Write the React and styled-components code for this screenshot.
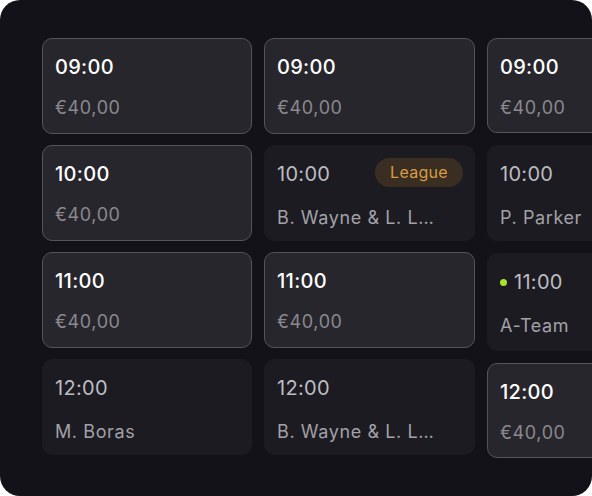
import React from "react";
import styled, { createGlobalStyle } from "styled-components";

const Global = createGlobalStyle`
  html, body { margin: 0; padding: 0; background: #ffffff; }
  body { font-family: Inter, "Noto Sans", sans-serif; -webkit-font-smoothing: antialiased; }
`;

const Panel = styled.div`
  width: 592px;
  height: 496px;
  box-sizing: border-box;
  background: #131218;
  border-radius: 20px;
  overflow: hidden;
  padding: 38px 0 0 42px;
  display: flex;
  gap: 12px;
`;

const Column = styled.div`
  flex: 0 0 ${(p) => p.$w}px;
  display: flex;
  flex-direction: column;
  gap: ${(p) => p.$gap}px;
`;

const Card = styled.div`
  box-sizing: border-box;
  height: ${(p) => p.$h || 96}px;
  border-radius: 10px;
  padding: 14px 12px 14px 12px;
  display: flex;
  flex-direction: column;
  gap: ${(p) => (p.$open ? 14 : 17)}px;
  background: ${(p) => (p.$open ? "#27262c" : "#1c1b21")};
  border: 1px solid ${(p) => (p.$open ? "#55545a" : "#1c1b21")};
`;

const Head = styled.div`
  height: 28px;
  display: flex;
  align-items: center;
  justify-content: space-between;
`;

const TimeWrap = styled.div`
  display: flex;
  align-items: center;
  gap: 7px;
`;

const Time = styled.span`
  font-size: 20px;
  line-height: 28px;
  font-weight: ${(p) => (p.$open ? 500 : 400)};
  color: ${(p) => (p.$open ? "#ffffff" : "#bdbcc1")};
  letter-spacing: 0.3px;
`;

const Dot = styled.span`
  width: 7px;
  height: 7px;
  border-radius: 50%;
  background: #a6e22e;
  flex: none;
`;

const Sub = styled.div`
  font-size: 18px;
  line-height: 26px;
  color: ${(p) => (p.$open ? "#8a898f" : "#a2a1a7")};
  letter-spacing: 0.6px;
  white-space: nowrap;
`;

const Badge = styled.span`
  height: 29px;
  padding: 0 15px;
  border-radius: 15px;
  background: #3a2e22;
  color: #d99b45;
  font-size: 16px;
  line-height: 29px;
  letter-spacing: 0.3px;
  margin-top: -4px;
  margin-right: -1px;
`;

const columns = [
  {
    w: 210,
    gap: 11,
    slots: [
      { time: "09:00", open: true, sub: "€40,00" },
      { time: "10:00", open: true, sub: "€40,00" },
      { time: "11:00", open: true, sub: "€40,00" },
      { time: "12:00", sub: "M. Boras" },
    ],
  },
  {
    w: 211,
    gap: 11,
    slots: [
      { time: "09:00", open: true, sub: "€40,00" },
      { time: "10:00", sub: "B. Wayne & L. L…", badge: "League" },
      { time: "11:00", open: true, sub: "€40,00" },
      { time: "12:00", sub: "B. Wayne & L. L…" },
    ],
  },
  {
    w: 211,
    gap: 12,
    slots: [
      { time: "09:00", open: true, sub: "€40,00", h: 95 },
      { time: "10:00", sub: "P. Parker" },
      { time: "11:00", sub: "A-Team", dot: true, h: 98 },
      { time: "12:00", open: true, sub: "€40,00", h: 95 },
    ],
  },
];

export default function App() {
  return (
    <>
      <Global />
      <Panel>
        {columns.map((c, i) => (
          <Column key={i} $w={c.w} $gap={c.gap}>
            {c.slots.map((s, j) => (
              <Card key={j} $open={s.open} $h={s.h}>
                <Head>
                  <TimeWrap>
                    {s.dot && <Dot />}
                    <Time $open={s.open}>{s.time}</Time>
                  </TimeWrap>
                  {s.badge && <Badge>{s.badge}</Badge>}
                </Head>
                <Sub $open={s.open}>{s.sub}</Sub>
              </Card>
            ))}
          </Column>
        ))}
      </Panel>
    </>
  );
}
